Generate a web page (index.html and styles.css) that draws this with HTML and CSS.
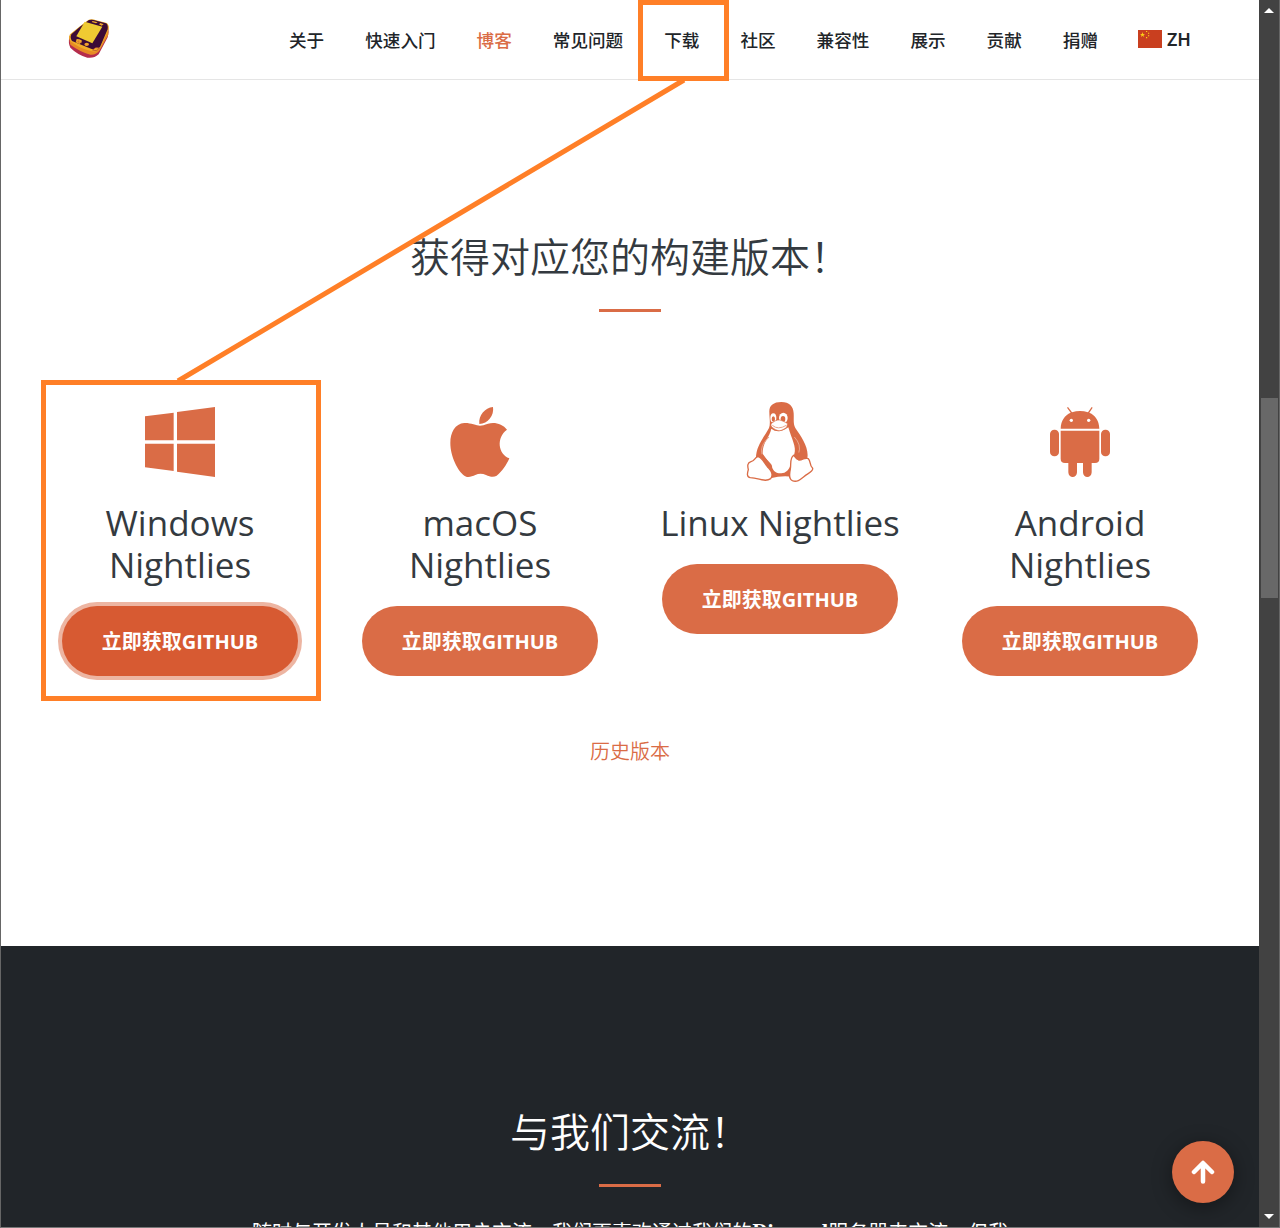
FILE: index.html
```html
<!DOCTYPE html>
<html lang="zh-CN">
<head>
<meta charset="utf-8">
<title>Vita3K</title>
<link rel="stylesheet" href="styles.css">
</head>
<body>
<div class="window">
  <div class="page">
    <header class="navbar">
      <svg class="logo" viewBox="0 0 240 255">
        <path d="M58 112Q54 130 61 143Q82 164 112 173Q132 176 146 163L173 112Q178 95 174 82L150 115L62 105Z" fill="#b52d4c"/>
        <path d="M57 109L61 134Q91 156 121 164Q138 166 149 151L175 104V77L150 116Z" fill="#e78b24"/>
        <path d="M115 60Q124 55 139 61L170 69Q178 74 176 88L150 145Q141 158 122 153Q86 145 62 124Q54 114 60 103L88 80Z" fill="#f0ae28"/>
        <path d="M117 60Q127 57 139 62L168 70Q175 74 173 88L150 141Q141 150 125 147L66 123Q59 113 64 103L90 80Z" fill="#3c0b36"/>
        <path d="M104 65L157 80L127 130L79 109Z" fill="#efca32"/>
        <path d="M128 63L143 67L138 70L125 66ZM151 69L161 73L155 77L147 73Z" fill="#f2a72b"/>
        <path d="M80 117L88 118L95 121V127L88 132L77 127Z" fill="#f1ad2b"/>
        <path d="M79 123L94 128M87 118L84 131" stroke="#d77430" stroke-width="2"/>
        <ellipse cx="110" cy="133" rx="7" ry="5" fill="#f2a12c"/>
        <path d="M128 150Q135 139 148 144Q142 155 128 150Z" fill="#efb12c" stroke="#a93634" stroke-width="2"/>
      </svg>
      <nav class="links">
        <a>关于</a><a>快速入门</a><a class="current">博客</a><a>常见问题</a><a>下载</a><a>社区</a><a>兼容性</a><a>展示</a><a>贡献</a><a>捐赠</a>
        <a class="lang"><svg class="flag" viewBox="0 0 24 18"><path fill="#c93f1f" d="M0 0h24v18H0z"/><path fill="#fcd116" d="M4.500 2l.6 1.900h2l-1.600 1.200.6 1.900-1.600-1.200-1.600 1.200.6-1.900L1.900 3.900h2zM8 1h1.200v1H8zM10 2.700h1.200v1H10zM10 5.200h1.200v1H10zM8 7h1.200v1.200H8z"/></svg>ZH</a>
      </nav>
    </header>

    <main class="downloads">
      <h2 class="title">获得对应您的构建版本！</h2>
      <div class="divider"></div>
      <div class="platforms">
        <section class="platform">
          <svg class="icon" viewBox="0 0 300 300"><path d="M45 79L131 68V151H45zM141 66L255 51V151H141zM45 161H131V243L45 232zM141 161H255V261L141 245z"/></svg>
          <h3>Windows Nightlies</h3><a class="button focused">立即获取GITHUB</a>
        </section>
        <section class="platform">
          <svg class="icon" viewBox="0 0 300 300"><path d="M148 102C145 76 165 53 189 51C193 76 174 102 148 102ZM231 119C218 101 193 95 174 101C163 104 157 107 150 107C139 107 121 98 103 99C75 101 61 127 61 159C61 200 84 244 103 257C113 265 126 259 136 255C147 250 158 251 168 255C179 260 191 263 200 257C216 245 230 224 238 205C204 192 198 143 231 119Z"/></svg>
          <h3>macOS Nightlies</h3><a class="button">立即获取GITHUB</a>
        </section>
        <section class="platform">
          <svg class="icon" viewBox="0 0 300 300">
            <path d="M118 66C117 47 130 36 154 36C178 36 190 49 191 70C192 91 189 101 196 114C214 141 240 175 231 210L190 260Q151 256 125 264L78 208C76 168 103 142 117 114C122 101 118 84 118 66Z"/>
            <path class="light" d="M124 116C119 142 97 156 98 191L126 231C130 245 141 251 154 250C166 250 180 240 182 220L193 192C200 171 185 148 175 112Q145 133 124 116Z"/>
            <ellipse class="light" cx="130" cy="84" rx="9" ry="14"/><ellipse class="light" cx="160" cy="84" rx="13" ry="16"/>
            <ellipse cx="130" cy="87" rx="5" ry="8"/><ellipse cx="159" cy="87" rx="7" ry="9"/>
            <path class="beak" d="M123 101C132 95 140 88 149 90C156 92 166 96 173 101L170 112C158 120 151 124 142 121C135 119 128 114 123 108Z"/>
            <path class="smile" d="M127 106Q144 121 169 106M117 141Q88 168 96 193M193 141Q215 164 206 190"/>
            <path class="foot" d="M82 200C94 199 102 217 112 230C125 242 130 256 122 266C105 278 88 264 61 263C49 262 52 249 55 239C52 226 52 219 63 215C74 213 74 204 82 200ZM191 196C178 206 184 222 181 237C178 251 175 266 187 272C205 279 216 263 231 253C241 247 250 242 248 235C237 225 243 213 235 206C223 202 210 213 200 206Z"/>
            <path d="M96 193L121 220Q130 230 124 236L112 231ZM196 190Q212 182 226 200Q220 213 206 212Q193 205 196 190Z"/>
          </svg>
          <h3>Linux Nightlies</h3><a class="button">立即获取GITHUB</a>
        </section>
        <section class="platform">
          <svg class="icon" viewBox="0 0 300 300">
            <path d="M92 116C93 91 104 76 122 68L111 53L114 51L126 67Q150 59 174 67L185 51L188 53L178 68C196 76 207 91 208 116ZM92 122H208V206Q208 219 195 219H185V247C185 266 159 266 159 247V219H141V247C141 266 115 266 115 247V219H105Q92 219 92 206Z"/>
            <rect x="60" y="119" width="27" height="80" rx="13"/><rect x="213" y="119" width="27" height="80" rx="13"/>
            <circle class="light" cx="124" cy="91" r="5"/><circle class="light" cx="176" cy="91" r="5"/>
          </svg>
          <h3>Android Nightlies</h3><a class="button">立即获取GITHUB</a>
        </section>
      </div>
      <a class="history">历史版本</a>
    </main>

    <section class="community">
      <h2 class="title">与我们交流！</h2>
      <div class="divider"></div>
      <p>随时与开发人员和其他用户交流，我们更喜欢通过我们的<strong>Discord</strong>服务器来交流，但我</p>
    </section>
  </div>
  <div class="scrollbar">
    <svg class="arrow" viewBox="0 0 10 5"><path d="M0 5L5 0l5 5z"/></svg>
    <svg class="arrow" viewBox="0 0 10 5"><path d="M0 0h10L5 5z"/></svg>
    <div class="thumb"></div>
  </div>
  <a class="to-top"><svg viewBox="0 0 24 24"><path d="M12 21.500V4M3 12l9-9 9 9"/></svg></a>
  <svg class="annotations" viewBox="0 0 1280 1228">
    <path d="M640.500 2.500H726.500V78.500H640.500ZM43.500 382.500H318.500V698.500H43.500ZM684 80L178 381"/>
  </svg>
</div>
</body>
</html>
```
FILE: styles.css
```css
* { box-sizing: border-box; }
body {
  margin: 0;
  font-family: "Open Sans", "Noto Sans CJK SC", sans-serif;
  color: #212529;
}
.window {
  position: relative;
  display: flex;
  width: 1280px;
  height: 1228px;
  overflow: hidden;
  border-left: 1px solid #666;
  border-bottom: 1px solid #777;
}
.page { width: 1258px; height: 1227px; overflow: hidden; background: #fff; }
.navbar {
  display: flex;
  justify-content: space-between;
  height: 80px;
  padding: 0 68px 0 49px;
  border-bottom: 1px solid #e5e5e5;
}
.logo { width: 80px; height: 85px; flex: none; }
.links { display: flex; gap: 41px; height: 81px; align-items: center; }
.links a {
  font-size: 17.6px;
  line-height: 25px;
  font-weight: 500;
  white-space: nowrap;
}
.links .lang {
  display: flex;
  align-items: center;
  gap: 5px;
  width: 53px;
  margin: -2px 0 0 -1px;
  font-family: "Noto Sans", sans-serif;
  font-size: 18px;
  font-weight: 600;
}
.links .current { color: #da6c46; }
.flag { width: 24px; height: 18px; flex: none; margin-top: -2px; }
.downloads {
  display: flex;
  flex-direction: column;
  align-items: center;
  height: 866px;
  padding-top: 153px;
}
.title {
  margin: 0;
  font-size: 40px;
  line-height: 48px;
  font-weight: 350;
  color: #343a40;
}
.divider { flex: none; width: 62px; height: 3px; margin-top: 28px; background: #da6c46; }
.platforms {
  display: grid;
  grid-template-columns: repeat(4, 300px);
  margin-top: 78px;
}
.platform { display: flex; flex-direction: column; align-items: center; }
.icon { width: 100px; height: 100px; fill: #da6c46; }
.icon .light, .icon .foot, .icon .beak { fill: #fff; }
.icon .foot { stroke: #da6c46; stroke-width: 4; }
.icon .smile { fill: none; stroke: #e9a68e; stroke-width: 3; }
.icon .beak { stroke: #da6c46; stroke-width: 2; }
.platform h3 {
  width: 250px;
  margin: 12px 0 20px;
  font-size: 35px;
  line-height: 42px;
  font-weight: 400;
  text-align: center;
  color: #343a40;
}
.button {
  display: flex;
  align-items: center;
  justify-content: center;
  width: 236px;
  height: 70px;
  padding-bottom: 2px;
  border-radius: 35px;
  background: #da6c46;
  color: #fff;
  font-size: 20px;
  font-weight: 700;
}
.focused { background: #d75a32; box-shadow: 0 0 0 4px #edb5a2; }
.history { margin-top: 61px; font-size: 20px; line-height: 30px; font-weight: 350; color: #da6c46; }
.community {
  display: flex;
  flex-direction: column;
  align-items: center;
  height: 300px;
  padding-top: 162px;
  background: #212529;
}
.community .title { color: #fff; }
.community p { width: 756px; margin: 31px 0 0; font-size: 20px; line-height: 30px; white-space: nowrap; color: #fff; }
.community strong { font-family: "DejaVu Serif", serif; font-size: 17.7px; line-height: 1; vertical-align: 2px; }
.scrollbar {
  display: flex;
  flex-direction: column;
  justify-content: space-between;
  align-items: center;
  position: relative;
  width: 21px;
  padding: 8px 0;
  background: #424242;
  border-right: 1px solid #666;
}
.arrow { width: 10px; height: 5px; fill: #fff; }
.thumb { position: absolute; left: 2px; top: 398px; width: 17px; height: 200px; background: #686868; }
.to-top {
  position: absolute;
  left: 1171px;
  top: 1141px;
  display: flex;
  align-items: center;
  justify-content: center;
  width: 62px;
  height: 62px;
  border-radius: 50%;
  background: #da6c46;
  box-shadow: 0 4px 20px #0006;
}
.to-top svg { width: 24px; height: 24px; fill: none; stroke: #fff; stroke-width: 4.5; stroke-linecap: round; stroke-linejoin: round; }
.annotations { position: absolute; left: -1px; top: 0; width: 1280px; height: 1228px; fill: none; stroke: #ff7f27; stroke-width: 5; pointer-events: none; }
```
